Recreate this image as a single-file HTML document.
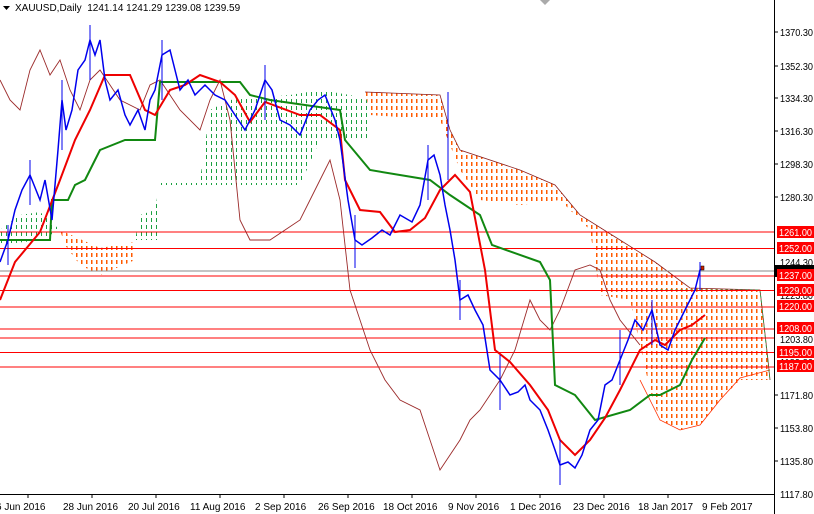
<!DOCTYPE html>
<html><head><meta charset="utf-8"><style>
html,body{margin:0;padding:0;background:#fff;width:814px;height:514px;overflow:hidden;font-family:"Liberation Sans",sans-serif}
svg text{font-family:"Liberation Sans",sans-serif;font-size:10px}
</style></head><body>
<svg width="814" height="514" viewBox="0 0 814 514" xmlns="http://www.w3.org/2000/svg">
<defs>
<pattern id="po" width="5" height="7" patternUnits="userSpaceOnUse"><rect x="1" y="1" width="1.5" height="4" fill="#ff5a00"/></pattern>
<pattern id="pg" width="5" height="7" patternUnits="userSpaceOnUse"><rect x="1" y="1" width="1" height="4" fill="#1aa040"/></pattern>
</defs>
<rect width="814" height="514" fill="#fff"/>
<polygon fill="url(#pg)" points="160,180 200,180 210,110 230,100 290,95 320,90 350,95 368,100 368,140 320,140 300,185 160,185"/>
<polygon fill="url(#pg)" points="0,230 20,215 40,212 60,230 40,240 0,245"/>
<polygon fill="url(#pg)" points="135,240 140,215 155,210 160,180 160,240"/>
<polygon fill="url(#po)" points="365,92 440,95 450,130 460,150 520,170 555,185 580,215 620,240 655,262 690,288 760,290 768,360 770,380 740,380 720,400 700,425 680,430 660,420 650,390 630,300 600,295 590,230 560,200 520,205 480,200 460,170 440,120 370,115"/>
<polygon fill="url(#po)" points="60,230 100,248 135,242 135,260 100,275 80,265 65,245"/>
<polyline fill="none" stroke="#8b2020" stroke-width="0.8" points="365,92 440,95 450,130 460,150 520,170 555,185 580,215 620,240 655,262 690,288 760,290 768,360 770,380"/>
<polyline fill="none" stroke="#ff3000" stroke-width="0.8" points="640,380 660,420 680,430 700,425 720,400 740,378 770,370"/>
<polyline fill="none" stroke="#1aa040" stroke-width="0.8" stroke-dasharray="3,2" points="655,290 760,290 770,380"/>
<g stroke="#ff0000" stroke-width="1">
<line x1="0" y1="232" x2="774" y2="232"/><line x1="0" y1="248.5" x2="774" y2="248.5"/>
<line x1="0" y1="276" x2="774" y2="276"/><line x1="0" y1="290.5" x2="774" y2="290.5"/>
<line x1="0" y1="307" x2="774" y2="307"/><line x1="0" y1="329" x2="774" y2="329"/>
<line x1="0" y1="338" x2="774" y2="338"/><line x1="0" y1="352.5" x2="774" y2="352.5"/>
<line x1="0" y1="367" x2="774" y2="367"/>
</g>
<line x1="0" y1="271" x2="774" y2="271" stroke="#888" stroke-width="1"/>
<polyline fill="none" stroke="#9b2a2a" stroke-width="0.9" points="0,80 10,100 20,110 30,70 40,50 50,75 60,60 70,90 80,110 90,80 100,70 120,100 140,110 150,85 160,80 180,110 200,130 210,100 220,80 230,120 240,220 250,240 270,240 285,230 300,220 310,200 320,180 330,160 340,200 350,290 360,320 370,350 385,380 400,400 420,410 430,440 440,470 450,455 460,440 470,420 480,410 490,395 500,380 515,350 530,300 540,320 550,330 560,310 575,270 590,265 600,270 610,300 620,320 640,345"/>
<polyline fill="none" stroke="#118811" stroke-width="2" points="0,240 50,240 52,200 68,200 75,185 85,180 95,160 100,150 125,140 155,140 160,82 240,82 250,95 270,100 340,110 345,140 370,170 430,180 450,195 480,215 492,245 540,262 550,280 555,385 575,395 595,420 630,410 650,395 660,395 680,385 692,360 705,338"/>
<polyline fill="none" stroke="#ee0000" stroke-width="2" points="0,300 15,262 40,232 60,180 75,140 90,110 105,75 130,75 145,110 155,115 170,90 185,85 200,75 220,82 235,95 250,122 265,102 300,115 320,115 340,130 345,180 360,210 380,212 395,232 410,230 425,218 440,190 455,175 470,192 485,270 495,350 510,362 530,385 548,410 560,440 575,455 590,440 605,418 620,390 640,350 655,340 665,345 680,330 692,325 705,315"/>
<polyline fill="none" stroke="#0000ee" stroke-width="1.5" points="0,262 8,240 15,210 22,190 30,175 40,200 45,180 52,220 58,150 62,100 66,130 72,110 78,70 85,60 90,40 95,55 100,40 105,80 110,100 118,90 125,115 130,125 138,110 145,130 150,100 155,90 162,55 170,50 175,70 180,90 188,80 195,95 205,85 215,95 225,100 235,115 245,130 255,110 265,80 272,90 280,120 290,125 300,135 310,110 318,100 325,95 335,120 340,140 348,200 355,240 362,245 372,238 382,230 390,235 400,215 412,222 420,205 428,160 434,155 440,175 445,205 450,230 455,260 460,300 468,295 475,310 483,325 490,370 500,380 510,395 518,392 525,385 530,400 540,410 548,430 555,450 560,465 568,462 575,468 582,455 590,430 598,420 605,385 612,380 620,360 628,340 635,320 643,330 652,310 660,345 668,350 675,330 685,310 695,290 700,270 704,268"/>
<g stroke="#0000ee" stroke-width="1">
<line x1="8" y1="225" x2="8" y2="265"/><line x1="30" y1="160" x2="30" y2="205"/><line x1="62" y1="80" x2="62" y2="150"/><line x1="90" y1="25" x2="90" y2="80"/>
<line x1="162" y1="40" x2="162" y2="100"/><line x1="265" y1="65" x2="265" y2="120"/><line x1="355" y1="215" x2="355" y2="268"/><line x1="428" y1="145" x2="428" y2="200"/>
<line x1="448" y1="92" x2="448" y2="180"/><line x1="460" y1="280" x2="460" y2="320"/><line x1="500" y1="355" x2="500" y2="410"/><line x1="560" y1="440" x2="560" y2="485"/>
<line x1="620" y1="330" x2="620" y2="385"/><line x1="652" y1="300" x2="652" y2="345"/><line x1="700" y1="262" x2="700" y2="290"/>
</g>
<rect x="701" y="266" width="3" height="4" fill="#cc2200" stroke="#000" stroke-width="0.5"/>
<line x1="774.5" y1="0" x2="774.5" y2="514" stroke="#000"/>
<line x1="0" y1="494.5" x2="774" y2="494.5" stroke="#000"/>
<g fill="#000" font-size="9">
<text x="780" y="36" textLength="33" lengthAdjust="spacingAndGlyphs">1370.30</text><text x="780" y="70" textLength="33" lengthAdjust="spacingAndGlyphs">1352.30</text><text x="780" y="102" textLength="33" lengthAdjust="spacingAndGlyphs">1334.30</text>
<text x="780" y="135" textLength="33" lengthAdjust="spacingAndGlyphs">1316.30</text><text x="780" y="168" textLength="33" lengthAdjust="spacingAndGlyphs">1298.30</text><text x="780" y="201" textLength="33" lengthAdjust="spacingAndGlyphs">1280.30</text>
<text x="780" y="266" textLength="33" lengthAdjust="spacingAndGlyphs">1244.30</text><text x="780" y="299" textLength="33" lengthAdjust="spacingAndGlyphs">1223.80</text><text x="780" y="343" textLength="33" lengthAdjust="spacingAndGlyphs">1203.80</text><text x="780" y="366" textLength="33" lengthAdjust="spacingAndGlyphs">1189.80</text>
<text x="780" y="399" textLength="33" lengthAdjust="spacingAndGlyphs">1171.80</text><text x="780" y="432" textLength="33" lengthAdjust="spacingAndGlyphs">1153.80</text><text x="780" y="465" textLength="33" lengthAdjust="spacingAndGlyphs">1135.80</text><text x="780" y="498" textLength="33" lengthAdjust="spacingAndGlyphs">1117.80</text>
</g>
<g stroke="#000"><line x1="774" y1="32" x2="778" y2="32"/><line x1="774" y1="66" x2="778" y2="66"/><line x1="774" y1="98" x2="778" y2="98"/><line x1="774" y1="131" x2="778" y2="131"/><line x1="774" y1="164" x2="778" y2="164"/><line x1="774" y1="197" x2="778" y2="197"/><line x1="774" y1="395" x2="778" y2="395"/><line x1="774" y1="428" x2="778" y2="428"/><line x1="774" y1="461" x2="778" y2="461"/></g>
<rect x="775" y="265" width="39" height="12" fill="#000"/>
<g fill="#ff0000">
<rect x="777" y="226" width="37" height="12"/><rect x="777" y="242" width="37" height="12"/><rect x="777" y="269" width="37" height="12"/>
<rect x="777" y="284" width="37" height="12"/><rect x="777" y="300" width="37" height="12"/><rect x="777" y="322" width="37" height="12"/>
<rect x="777" y="346" width="37" height="12"/><rect x="777" y="360" width="37" height="12"/>
</g>
<g fill="#fff" font-size="9.5">
<text x="779" y="236" textLength="33" lengthAdjust="spacingAndGlyphs">1261.00</text><text x="779" y="252" textLength="33" lengthAdjust="spacingAndGlyphs">1252.00</text><text x="779" y="279" textLength="33" lengthAdjust="spacingAndGlyphs">1237.00</text>
<text x="779" y="294" textLength="33" lengthAdjust="spacingAndGlyphs">1229.00</text><text x="779" y="310" textLength="33" lengthAdjust="spacingAndGlyphs">1220.00</text><text x="779" y="332" textLength="33" lengthAdjust="spacingAndGlyphs">1208.00</text>
<text x="779" y="356" textLength="33" lengthAdjust="spacingAndGlyphs">1195.00</text><text x="779" y="370" textLength="33" lengthAdjust="spacingAndGlyphs">1187.00</text>
</g>
<g fill="#000" font-size="9.5">
<text x="-4" y="510">6 Jun 2016</text><text x="63" y="510">28 Jun 2016</text><text x="128" y="510">20 Jul 2016</text>
<text x="190" y="510">11 Aug 2016</text><text x="255" y="510">2 Sep 2016</text><text x="318" y="510">26 Sep 2016</text>
<text x="383" y="510">18 Oct 2016</text><text x="448" y="510">9 Nov 2016</text><text x="510" y="510">1 Dec 2016</text>
<text x="573" y="510">23 Dec 2016</text><text x="638" y="510">18 Jan 2017</text><text x="702" y="510">9 Feb 2017</text>
</g>
<g stroke="#000"><line x1="28" y1="494" x2="28" y2="498"/><line x1="92" y1="494" x2="92" y2="498"/><line x1="156" y1="494" x2="156" y2="498"/><line x1="220" y1="494" x2="220" y2="498"/><line x1="284" y1="494" x2="284" y2="498"/><line x1="348" y1="494" x2="348" y2="498"/><line x1="412" y1="494" x2="412" y2="498"/><line x1="476" y1="494" x2="476" y2="498"/><line x1="540" y1="494" x2="540" y2="498"/><line x1="604" y1="494" x2="604" y2="498"/><line x1="668" y1="494" x2="668" y2="498"/></g>
<polygon points="3,6 10,6 6.5,10" fill="#000"/>
<text x="15" y="11" fill="#000">XAUUSD,Daily&#160;&#160;1241.14 1241.29 1239.08 1239.59</text>
<polygon points="540,0 550,0 545,5" fill="#aaa"/>
</svg>
</body></html>
